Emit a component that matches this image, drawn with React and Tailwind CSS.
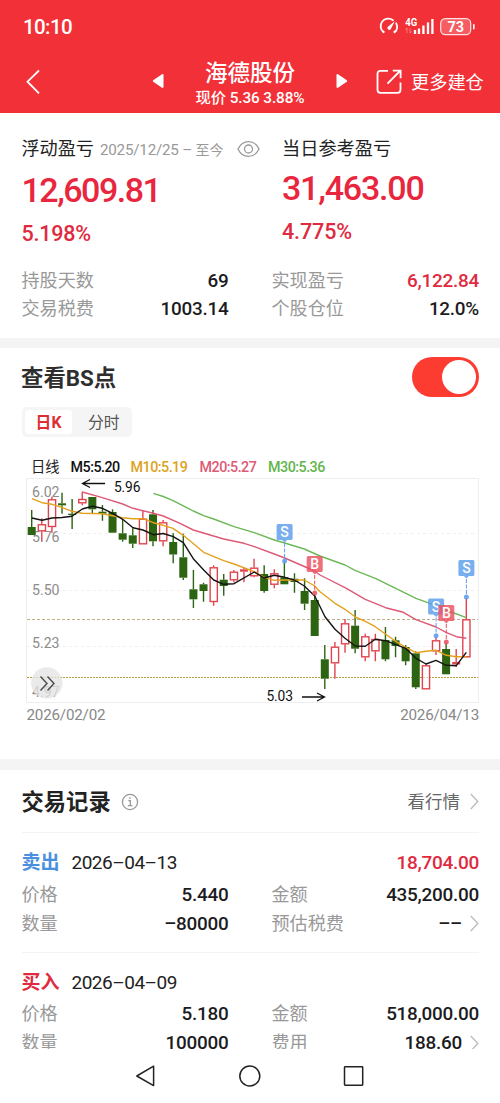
import React, { memo, useMemo } from 'react';

const UP_COLOR = '#e0454f';
const DOWN_COLOR = '#2c6412';

const CANDLE_START = 31.7;
const CANDLE_STEP = 10.107;

// [direction, body top, body bottom, wick top, wick bottom]
const CANDLES = [
  ['down', 527, 535, 510, 535],
  ['up', 524.3, 531.3, 518.3, 541],
  ['up', 499.3, 527, 496.7, 532.7],
  ['down', 503.3, 505.3, 492.7, 513.7],
  ['down', 513.7, 515, 499, 529],
  ['up', 499, 503.3, 491.7, 505.3],
  ['down', 497, 509.3, 497, 513.3],
  ['down', 511.7, 513.7, 505, 520.7],
  ['down', 512, 532.7, 509.3, 532.7],
  ['down', 533.3, 539.7, 520, 541.7],
  ['down', 535.3, 543.7, 528.3, 548],
  ['up', 518.7, 544.3, 510.7, 544.3],
  ['down', 514.3, 541.3, 510, 546.3],
  ['up', 522.3, 541.3, 520, 546.3],
  ['down', 542, 554.5, 533.3, 563.3],
  ['down', 557.3, 577.7, 533.7, 580],
  ['down', 589.3, 599.3, 570, 608],
  ['down', 584.3, 591, 582.7, 601.7],
  ['up', 567.3, 602, 565.3, 605.7],
  ['down', 579.7, 586, 574, 595.7],
  ['up', 571.7, 580.3, 570, 582.3],
  ['flat', 569.3, 571.7, 568, 582.3],
  ['up', 567.7, 576.3, 558.7, 577.3],
  ['down', 574, 591, 565.3, 592.7],
  ['up', 573.3, 584.7, 569.3, 588.3],
  ['down', 577.3, 584.3, 561.7, 584.3],
  ['down', 578.7, 582, 573.3, 592.7],
  ['down', 591, 603.7, 578.3, 610],
  ['down', 600, 636, 594, 636],
  ['down', 659.3, 678.7, 645, 689],
  ['up', 646.7, 663.3, 642, 678.7],
  ['up', 623.3, 644.3, 619, 652.7],
  ['down', 625.7, 648.7, 610, 653.3],
  ['up', 636.3, 657.3, 633.7, 661.3],
  ['up', 639, 651.3, 633.7, 661.3],
  ['down', 640, 659.3, 627, 661.3],
  ['down', 640.3, 646, 636.7, 657.3],
  ['down', 647, 661.3, 645, 665.3],
  ['down', 653.3, 687.3, 651.3, 689],
  ['up', 665.3, 689.3, 663.3, 689.3],
  ['up', 640.3, 651.3, 636.7, 655],
  ['down', 649, 674.3, 643, 674.3],
  ['flat', 662, 664.5, 649, 667],
  ['up', 619.3, 657.3, 598, 657.3],
];

const AVERAGES = [
  {
    key: 'm30',
    color: '#6cb857',
    points:
      '153.3,493.3 163.3,496.5 173,500.7 193.3,511 203.7,515.7 213.7,519 234,526.7 254.3,532.7 274.3,540 284.7,543 304.3,549 320,556 345,565 355,570.3 375.3,578.3 395.7,588.3 416,598.3 436,605.7 446,610 466.3,617.7',
  },
  {
    key: 'm20',
    color: '#dd5a76',
    points:
      '82.3,492 102.3,497.7 122.7,504 133,508.3 153.3,513.3 163.3,516 180,523.3 193.3,530 223.7,539 244,543.3 254.3,546.7 274.3,554 284.7,558 314.7,571 320,575 345,587.7 365.3,599.3 385.7,607.7 403.3,612.3 416,619.7 436,627 446,632.3 456.3,636.7 466.3,638.3',
  },
  {
    key: 'm10',
    color: '#e3a11e',
    points:
      '32,498.7 42,502.7 52,504.3 61.7,507.3 72,511.3 82.3,513.3 102.3,513.7 112.7,515.7 122.7,517.7 133,518.7 143,518.7 153.3,522.7 163.3,525.3 173,528.3 183.3,535.3 203.7,552.3 223.7,560.7 234,564 254.3,571.7 264.3,577.3 274.3,580.3 284.7,580 304.3,580 314.7,586 320,591.7 335,603.3 345,609.3 355.3,617 365.3,621.3 375.3,626.7 385.7,634.3 395.7,641.3 405.7,647.3 416,652.7 426,651.3 436,650.3 446.3,655.3 456.3,656.7 466.3,656.7',
  },
  {
    key: 'm5',
    color: '#141414',
    points:
      '32,518 42,520.3 52,518 62,517.5 72,516.3 82.3,509 92.3,506.3 102.3,508.3 112.7,513.3 122.7,519.3 133,527.7 143,530 153.3,534.7 163.3,533.5 173.3,536.7 183.3,542.7 193.3,558.7 203.7,570 213.7,580 223.7,584.3 234,583.7 254.3,572 264.3,578 274.3,575.3 284.7,577.3 294.3,580 304.3,586 314.7,596 320,606.5 325,616.7 335,629.3 345,638.3 355.3,646 365.3,646.3 375.3,639.3 385.7,640.7 395.7,644.7 405.7,648.3 416,658.3 426,664 436,660.3 446.3,665.3 456.3,665.7 466.3,652.3',
  },
];

const MARKERS = [
  { key: 's1', label: 'S', x: 284.6, top: 524, dot: 561 },
  { key: 'b1', label: 'B', x: 314.7, top: 556, dot: 593 },
  { key: 's2', label: 'S', x: 436.1, top: 598.5, dot: 635.7 },
  { key: 'b2', label: 'B', x: 446.3, top: 605, dot: 642 },
  { key: 's3', label: 'S', x: 466.4, top: 560, dot: 597 },
];

const PRICE_LABELS = [
  { value: '6.02', y: 497 },
  { value: '5.76', y: 542 },
  { value: '5.50', y: 595 },
  { value: '5.23', y: 647.7 },
  { value: '4.97', y: 696.5 },
];

const TRADES = [
  {
    side: '卖出',
    sideClass: 'text-[#4a8fe0]',
    date: '2026–04–13',
    profit: '18,704.00',
    price: '5.440',
    amount: '435,200.00',
    quantity: '–80000',
    feeLabel: '预估税费',
    fee: '––',
  },
  {
    side: '买入',
    sideClass: 'text-[#e02a40]',
    date: '2026–04–09',
    profit: '',
    price: '5.180',
    amount: '518,000.00',
    quantity: '100000',
    feeLabel: '费用',
    fee: '188.60',
  },
];

const StatusIcons = () => (
  <svg width="98" height="20" viewBox="0 0 98 20" fill="none" className="text-white">
    <path d="M4.6 15.3A7.6 7.6 0 0 1 14 3.2M17.2 6.3a7.6 7.6 0 0 1-1.6 9" stroke="currentColor" strokeWidth="1.8" strokeLinecap="round" />
    <path d="M3.2 13.6l2 1.8M16.8 13.6l-2 1.8" stroke="currentColor" strokeWidth="1.8" />
    <path d="M15.8 4.2 9.2 9.6a1.8 1.8 0 1 0 2.6 2.4z" fill="currentColor" />
    <text x="26.2" y="9.4" fontSize="10" fontWeight="700" fill="currentColor" textLength="12" lengthAdjust="spacingAndGlyphs">4G</text>
    <path d="M28 11v5M26.6 12.500l1.400-1.600M31 11v5M32.400 14.500 31 16.100" stroke="currentColor" strokeOpacity=".4" strokeWidth=".9" />
    <path d="M36 17v-4M40 17v-5.400M44.400 17V8.500M49 17V5.500M53.400 17V2" stroke="currentColor" strokeWidth="2.300" />
    <rect x="61.700" y="1.600" width="30" height="16" rx="4.600" fill="#fff" fillOpacity=".22" stroke="#fff" strokeOpacity=".85" strokeWidth="1.200" />
    <path d="M94.800 7.800v4" stroke="currentColor" strokeWidth="1.600" strokeLinecap="round" />
    <text x="76.700" y="14.800" fontSize="14.500" fontWeight="700" fill="currentColor" textAnchor="middle">73</text>
  </svg>
);

const Chevron = () => (
  <svg width="9" height="17" viewBox="0 0 9 17" fill="none" stroke="#bdbdbd" strokeWidth="1.4">
    <path d="m.8 1 7 7.5-7 7.5" />
  </svg>
);

const Header = () => (
  <header className="h-[113px] bg-[#f23037] text-white">
    <div className="flex h-[53px] items-center justify-between pr-[23px] pl-[23px]">
      <span className="pt-px text-[20.5px] leading-none font-medium tracking-[-0.6px]">10:10</span>
      <StatusIcons />
    </div>
    <div className="flex h-[60px] items-center pl-[26px]">
      <svg width="14" height="26" viewBox="0 0 14 26" fill="none" stroke="currentColor" strokeWidth="1.8" className="mb-0.5">
        <path d="M13 1.5 1.5 12.7 13 24.3" />
      </svg>
      <svg width="12" height="16" viewBox="0 0 12 16" fill="currentColor" className="mb-1 ml-[112px]">
        <path d="M10 1.2 1.2 7.2q-.9.8 0 1.6L10 14.8q1.5.6 1.5-1V2.2q0-1.6-1.5-1z" />
      </svg>
      <div className="ml-1 flex w-[164px] flex-col items-center">
        <h1 className="pt-0.5 text-[22.5px] leading-[28px] font-medium">海德股份</h1>
        <p className="text-[15.3px] leading-[23px] font-medium tracking-[-0.1px] whitespace-nowrap">现价 5.36 3.88%</p>
      </div>
      <svg width="12" height="16" viewBox="0 0 12 16" fill="currentColor" className="mb-1 ml-1">
        <path d="M2 1.2l8.8 6q.9.8 0 1.6L2 14.8q-1.5.6-1.5-1V2.2q0-1.6 1.5-1z" />
      </svg>
      <svg width="26" height="26" viewBox="0 0 26 26" fill="none" stroke="currentColor" strokeWidth="1.8" className="mb-[3px] ml-7">
        <path d="M12 1.8H4.5a3 3 0 0 0-3 3v16a3 3 0 0 0 3 3h17a3 3 0 0 0 3-3V13.5" />
        <path d="M11.5 14.6 24 2M16.8 1.7h7.8v7.6" />
      </svg>
      <span className="ml-[9px] text-[18.2px] leading-6">更多建仓</span>
    </div>
  </header>
);

const StatRow = ({ label, value, valueClass = 'text-[#1c1c1e]', arrow = false }) => (
  <div className="flex h-full items-center justify-between">
    <span className="text-[18.1px] leading-6 text-[#999]">{label}</span>
    <span className="flex items-center gap-2">
      <span className={`text-[18.9px] leading-6 font-medium tracking-[-0.25px] ${valueClass}`}>{value}</span>
      {arrow && <Chevron />}
    </span>
  </div>
);

const Summary = () => (
  <section className="h-[225px] bg-white pt-[22px] pr-[21px] pl-[21.500px]">
    <div className="flex">
      <div className="w-[260.500px]">
        <div className="flex h-7 items-center">
          <h2 className="text-[18.1px] leading-6 text-[#222]">浮动盈亏</h2>
          <span className="mt-0.5 ml-1.5 text-[15.2px] leading-6 tracking-[-0.2px] whitespace-nowrap text-[#999]">
            2025/12/25 – <span className="text-[14px]">至今</span>
          </span>
          <svg width="23" height="18" viewBox="0 0 23 18" fill="none" stroke="#999" strokeWidth="1.3" className="ml-3.5">
            <path d="M1 9C3.2 4.300 7 1.600 11.500 1.600S19.800 4.300 22 9c-2.200 4.700-6 7.400-10.500 7.400S3.200 13.700 1 9z" />
            <circle cx="11.500" cy="9" r="4" />
          </svg>
        </div>
        <p className="mt-1.5 text-[34px] leading-[42px] font-medium tracking-[-1.5px] text-[#e8273f]">12,609.81</p>
        <p className="mt-[11px] text-[21.500px] leading-6 font-medium tracking-[-0.2px] text-[#e02a40]">5.198%</p>
      </div>
      <div>
        <h2 className="flex h-7 items-center text-[18.2px] leading-6 text-[#222]">当日参考盈亏</h2>
        <p className="mt-1 text-[34px] leading-[42px] font-medium tracking-[-1.2px] text-[#e8273f]">31,463.00</p>
        <p className="mt-[11px] text-[21.500px] leading-6 font-medium tracking-[-0.1px] text-[#e02a40]">4.775%</p>
      </div>
    </div>
    <div className="mt-[21px] grid auto-rows-[28px] grid-cols-[207px_207.500px] gap-x-[43px]">
      <StatRow label="持股天数" value="69" />
      <StatRow label="实现盈亏" value="6,122.84" valueClass="text-[#e02a40]" />
      <StatRow label="交易税费" value="1003.14" />
      <StatRow label="个股仓位" value="12.0%" />
    </div>
  </section>
);

const Candle = ({ index, data }) => {
  const [direction, top, bottom, high, low] = data;
  const x = CANDLE_START + CANDLE_STEP * index;
  const color = direction === 'down' ? DOWN_COLOR : UP_COLOR;
  return (
    <g stroke={color}>
      <path d={`M${x} ${high}V${top}M${x} ${bottom}V${low}`} strokeWidth="1.4" />
      {direction === 'up' ? (
        <rect x={x - 3.5} y={top + 0.5} width="7.2" height={bottom - top - 1} fill="#fff" fillOpacity=".6" strokeWidth="1.4" />
      ) : (
        <rect x={x - 4} y={top} width="8" height={bottom - top} fill={color} stroke="none" />
      )}
    </g>
  );
};

const Marker = ({ label, x, top, dot }) => {
  const color = label === 'S' ? '#5c9dec' : '#ec5060';
  return (
    <g>
      <path d={`M${x} ${top + 19}V${dot}`} stroke={color} strokeWidth="1" strokeDasharray="4 1.500" />
      <circle cx={x} cy={dot} r="2.500" fill={color} fillOpacity=".85" />
      <path
        d={`M${x - 6.500} ${top}h13q1.500 0 1.500 1.500v13q0 1.500-1.500 1.500h-4l-2.500 2.500-2.500-2.500h-4q-1.500 0-1.500-1.500v-13q0-1.500 1.500-1.500z`}
        fill={color}
        fillOpacity=".82"
      />
      <text x={x} y={top + 13.2} fontSize="14" fontWeight="500" textAnchor="middle" fill="#fff">{label}</text>
    </g>
  );
};

const KLineChart = () => {
  const candles = useMemo(
    () => CANDLES.map((data, index) => <Candle key={index} index={index} data={data} />),
    []
  );

  return (
    <svg width="500" height="230" viewBox="0 476 500 230" fill="none" className="block">
      <rect x="26.500" y="478.500" width="452" height="224" stroke="#eeeeee" />
      <path d="M27 533.500h451M27 590.500h451M27 646.500h451" stroke="#efefef" strokeDasharray="3 3" />
      <g fill="#8c8c8c" fontSize="15.2">
        {PRICE_LABELS.map((item) => (
          <text key={item.value} x="32" y={item.y} textLength="27.500" lengthAdjust="spacingAndGlyphs">{item.value}</text>
        ))}
      </g>
      <path d="M27 619.500h451" stroke="#bdb286" strokeWidth="1" strokeDasharray="3 2" />
      <path d="M27 677.500h451" stroke="#b89f3c" strokeWidth="1" strokeDasharray="2 1" />
      {candles}
      {AVERAGES.map((line) => (
        <polyline key={line.key} points={line.points} stroke={line.color} strokeWidth="1.400" strokeLinejoin="round" />
      ))}
      {MARKERS.map((item) => (
        <Marker key={item.key} label={item.label} x={item.x} top={item.top} dot={item.dot} />
      ))}
      <g stroke="#111" strokeWidth="1.300">
        <path d="M105 483.500H83M90 479.500l-7.500 4 7.500 4" />
        <path d="M302 697h22M317 693l7.500 4-7.500 4" />
      </g>
      <g fill="#111" fontSize="13.800">
        <text x="114" y="491.500" textLength="26.500">5.96</text>
        <text x="266.500" y="701" textLength="26.500">5.03</text>
      </g>
      <circle cx="46.800" cy="683" r="15.700" fill="#e4e4e4" fillOpacity=".78" />
      <path d="m40.500 676.500 6.500 7-6.500 7M47.500 676.500l6.500 7-6.500 7" stroke="#4a4a4a" strokeWidth="1.400" />
    </svg>
  );
};

const ChartSection = () => (
  <section className="h-[411px] bg-white pt-[9px]">
    <div className="flex h-10 items-center justify-between pr-[21px] pl-[21px]">
      <h2 className="pt-0.5 text-[22.400px] leading-8 font-bold text-[#2e2e2e]">查看BS点</h2>
      <button type="button" className="flex h-10 w-[67px] items-center justify-end rounded-full bg-[#fc3b31] pr-[3px]">
        <span className="size-[34px] rounded-full bg-white" />
      </button>
    </div>
    <div className="mt-2.5 ml-[22px] flex h-[30px] w-[110px] items-center rounded-[5px] bg-[#f5f5f5] pl-[3px] text-[15.800px] leading-6">
      <span className="flex h-6 w-[47px] items-center justify-center rounded-[3px] bg-white pt-0.5 font-bold text-[#dc2f34]">日K</span>
      <span className="ml-4 pt-px text-[#555]">分时</span>
    </div>
    <div className="mt-[19px] flex h-5 items-center pt-px pl-[31px] text-[14.300px] leading-5 font-medium tracking-[-0.5px] whitespace-nowrap">
      <span className="w-[39.500px] font-normal tracking-normal text-[#222]">日线</span>
      <span className="w-[60px] text-[#111]">M5:5.20</span>
      <span className="w-[69px] text-[#dca31d]">M10:5.19</span>
      <span className="w-[68.500px] text-[#dd5a76]">M20:5.27</span>
      <span className="text-[#62b54d]">M30:5.36</span>
    </div>
    <KLineChart />
    <div className="flex h-[18px] items-center justify-between pr-[21px] pl-[26.500px] text-[15.200px] leading-[18px] tracking-[-0.2px] text-[#888]">
      <span>2026/02/02</span>
      <span>2026/04/13</span>
    </div>
  </section>
);

const TradeItem = ({ trade }) => (
  <article className="h-[119.500px] border-t border-[#f3f3f3] pt-[15px]">
    <div className="flex h-[30px] items-center text-[19px] leading-6">
      <span className={`font-bold ${trade.sideClass}`}>{trade.side}</span>
      <span className="ml-3 tracking-[-0.5px] text-[#222]">{trade.date}</span>
      <span className="ml-auto font-medium tracking-[-0.3px] text-[#e02a40]">{trade.profit}</span>
    </div>
    <div className="mt-0.5 grid auto-rows-[29px] grid-cols-[207px_207.500px] gap-x-[43px]">
      <StatRow label="价格" value={trade.price} />
      <StatRow label="金额" value={trade.amount} />
      <StatRow label="数量" value={trade.quantity} />
      <StatRow label={trade.feeLabel} value={trade.fee} arrow />
    </div>
  </article>
);

const TradeRecords = () => (
  <section className="h-[279px] overflow-hidden bg-white pr-[21px] pl-[21.500px]">
    <div className="flex h-[62px] items-center pt-px">
      <h2 className="text-[22.300px] leading-8 font-bold text-[#222]">交易记录</h2>
      <svg width="18" height="18" viewBox="0 0 18 18" fill="none" stroke="#999" strokeWidth="1.300" className="ml-2.5">
        <circle cx="9" cy="9" r="7.600" />
        <path d="M7.300 7.600h2v5M6.800 12.700h4.600M8.300 5h1.500" />
      </svg>
      <span className="mr-2.5 ml-auto text-[17.500px] leading-6 text-[#666]">看行情</span>
      <Chevron />
    </div>
    {TRADES.map((trade) => (
      <TradeItem key={trade.date} trade={trade} />
    ))}
  </section>
);

const NavBar = () => (
  <nav className="flex h-[54px] items-center bg-white pl-[135px]">
    <svg width="230" height="24" viewBox="0 0 230 24" fill="none" stroke="#222" strokeWidth="1.500" strokeLinejoin="round">
      <path d="M18.600 2.200v19.400L1.800 12z" />
      <circle cx="114.800" cy="12" r="10" />
      <rect x="209.500" y="2.800" width="18.200" height="18.400" rx=".6" />
    </svg>
  </nav>
);

const App = () => (
  <div className="h-[1103px] w-[500px] overflow-hidden bg-white font-['Roboto','Noto_Sans_CJK_SC',sans-serif]">
    <Header />
    <Summary />
    <div className="h-2.5 bg-[#f4f4f4]" />
    <ChartSection />
    <div className="h-[11px] bg-[#f4f4f4]" />
    <TradeRecords />
    <NavBar />
  </div>
);

export default memo(App);
